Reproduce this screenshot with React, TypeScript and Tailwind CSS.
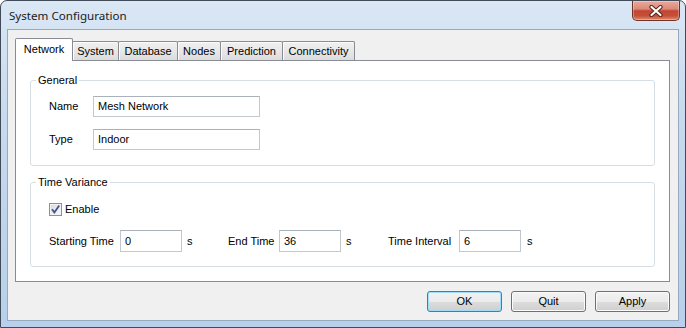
import React from 'react'

const TABS = [
  { label: 'Network', w: 'w-[58px]', active: true },
  { label: 'System', w: 'w-[47px]', active: false },
  { label: 'Database', w: 'w-[60px]', active: false },
  { label: 'Nodes', w: 'w-[44px]', active: false },
  { label: 'Prediction', w: 'w-[63px]', active: false },
  { label: 'Connectivity', w: 'w-[73px]', active: false },
]

function CloseButton() {
  return (
    <div className="w-[48px] h-[20px] rounded-b-[5px] border border-t-0 border-[#6e3329] bg-[linear-gradient(to_bottom,#e8ab9e_0%,#dc8a78_42%,#c4452f_52%,#c4503a_78%,#de8c6c_100%)] shadow-[inset_0_0_0_1px_rgba(255,255,255,0.3)] flex items-center justify-center">
      <svg width="16" height="12" viewBox="0 0 16 12">
        <path d="M3.5 2 L12.5 10 M12.5 2 L3.5 10" stroke="#5b2219" strokeWidth="4.2" strokeLinecap="round" />
        <path d="M3.5 2 L12.5 10 M12.5 2 L3.5 10" stroke="#ffffff" strokeWidth="2.2" strokeLinecap="round" />
      </svg>
    </div>
  )
}

function TextBox({ value, w, h }: { value: string; w: string; h: string }) {
  return (
    <div className={`${w} ${h} shrink-0 flex items-center pl-[4px] bg-white border border-[#c2c8d0] border-t-[#abb1ba] text-black`}>
      {value}
    </div>
  )
}

function Checkbox() {
  return (
    <svg width="13" height="13" viewBox="0 0 13 13" className="shrink-0">
      <defs>
        <linearGradient id="cb" x1="0" y1="0" x2="1" y2="1">
          <stop offset="0" stopColor="#dcdcdc" />
          <stop offset="1" stopColor="#f8f8f8" />
        </linearGradient>
      </defs>
      <rect x="0.5" y="0.5" width="12" height="12" fill="#f4f4f4" stroke="#8e8f8f" />
      <rect x="2" y="2" width="9" height="9" fill="url(#cb)" />
      <path d="M3 6.2 L5.4 9.4 L10.2 2.6" fill="none" stroke="#3f5493" strokeWidth="1.8" />
    </svg>
  )
}

function Button({ label, primary }: { label: string; primary?: boolean }) {
  return (
    <div
      className={`w-[75px] h-[21px] rounded-[3px] border flex items-center justify-center text-black bg-[linear-gradient(to_bottom,#f2f2f2_0%,#ebebeb_50%,#dddddd_51%,#cfcfcf_100%)] ${
        primary ? 'border-[#3c7fb1] shadow-[inset_0_0_0_1px_#9fdcf7]' : 'border-[#707070] shadow-[inset_0_0_0_1px_#fbfbfb]'
      }`}
    >
      {label}
    </div>
  )
}

export default function App() {
  return (
    <div className="w-[686px] h-[328px] bg-white">
      <div className="w-[686px] h-[328px] flex flex-col border border-[#414b57] rounded-t-[7px] bg-[linear-gradient(to_bottom,#dae7f5_0%,#c7daee_35%,#b8d0eb_100%)] text-[11px] leading-[13px] font-['Liberation_Sans',Arial,sans-serif]">
        {/* title bar */}
        <div className="h-[28px] flex items-start justify-between pl-[8px] pr-[5px]">
          <span className="mt-[7px] text-[11.6px] leading-[16px] text-[#1b1b1b] font-['Noto_Sans',sans-serif]">System Configuration</span>
          <CloseButton />
        </div>

        {/* client area */}
        <div className="mx-[6px] h-[292px] border border-[#97a9bd] bg-[#f0f0f0] flex flex-col pl-[7px] pr-[8px] pt-[8px]">
          {/* tabs */}
          <div className="h-[22px] flex items-end">
            {TABS.map((t) =>
              t.active ? (
                <div key={t.label} className={`${t.w} h-[23px] -mb-px relative z-10 bg-white border border-b-0 border-[#898c95] rounded-t-[2px] flex items-center justify-center pb-[2px] text-black`}>
                  {t.label}
                </div>
              ) : (
                <div key={t.label} className={`${t.w} h-[19px] -ml-px border border-b-0 border-[#898c95] rounded-t-[2px] bg-[linear-gradient(to_bottom,#f0f0f0_0%,#e8e8e8_50%,#dbdbdb_100%)] shadow-[inset_1px_1px_0_#fcfcfc] flex items-center justify-center text-black`}>
                  {t.label}
                </div>
              )
            )}
          </div>

          {/* tab panel */}
          <div className="w-[655px] h-[222px] bg-white border border-[#898c95] flex flex-col px-[14px] text-black">
            <fieldset className="mt-[12px] border border-[#d5dfe5] rounded-[3px]">
              <legend className="ml-[5px] px-[2px] leading-[14px]">General</legend>
              <div className="flex flex-col gap-[12px] pt-[9px] pb-[15px] pl-[18px]">
                <div className="flex items-center">
                  <span className="w-[44px]">Name</span>
                  <TextBox value="Mesh Network" w="w-[167px]" h="h-[21px]" />
                </div>
                <div className="flex items-center">
                  <span className="w-[44px]">Type</span>
                  <TextBox value="Indoor" w="w-[167px]" h="h-[21px]" />
                </div>
              </div>
            </fieldset>

            <fieldset className="mt-[9px] border border-[#d5dfe5] rounded-[3px]">
              <legend className="ml-[5px] px-[2px] leading-[14px]">Time Variance</legend>
              <div className="flex flex-col pt-[12px] pb-[14px] pl-[18px]">
                <div className="h-[17px] flex items-center gap-[3px]">
                  <Checkbox />
                  <span>Enable</span>
                </div>
                <div className="mt-[12px] flex items-center">
                  <span className="w-[71px]">Starting Time</span>
                  <TextBox value="0" w="w-[62px]" h="h-[22px]" />
                  <span className="w-[46px] pl-[5px]">s</span>
                  <span className="w-[51px]">End Time</span>
                  <TextBox value="36" w="w-[62px]" h="h-[22px]" />
                  <span className="w-[47px] pl-[5px]">s</span>
                  <span className="w-[71px]">Time Interval</span>
                  <TextBox value="6" w="w-[62px]" h="h-[22px]" />
                  <span className="pl-[6px]">s</span>
                </div>
              </div>
            </fieldset>
          </div>

          {/* buttons */}
          <div className="mt-[9px] flex justify-end gap-[9px]">
            <Button label="OK" primary />
            <Button label="Quit" />
            <Button label="Apply" />
          </div>
        </div>
      </div>
    </div>
  )
}
